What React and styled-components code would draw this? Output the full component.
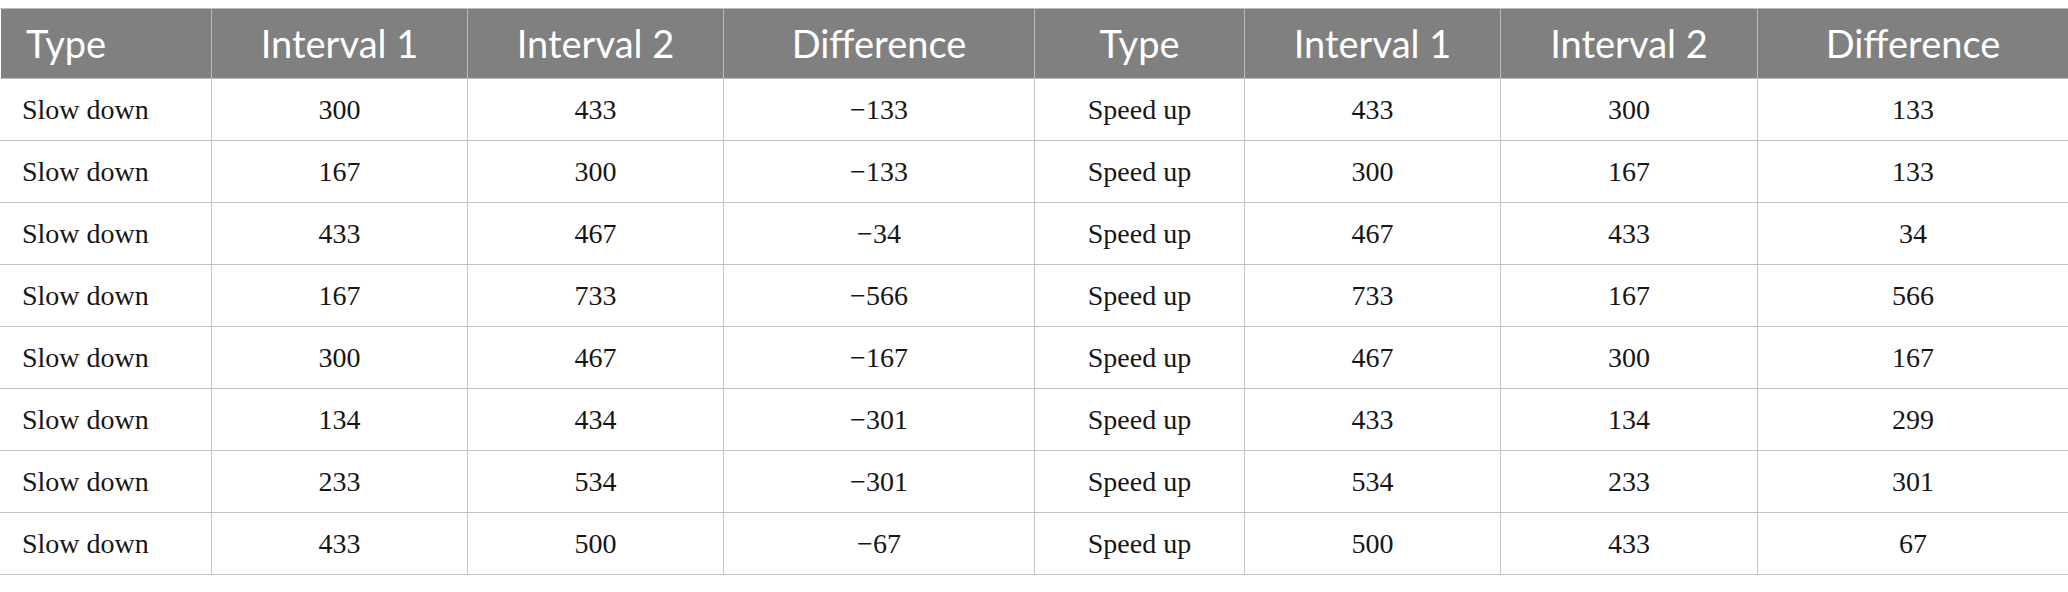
import React from "react";
import styled, { createGlobalStyle } from "styled-components";

const GlobalStyle = createGlobalStyle`
  body {
    margin: 0;
    padding-top: 8px;
    background: #ffffff;
  }
`;

const Table = styled.table`
  width: 2068px;
  border-collapse: collapse;
  table-layout: fixed;
`;

const HeadCell = styled.th`
  box-sizing: border-box;
  height: 70px;
  padding: 0 0 2px ${(props) => (props.$left ? "25px" : "0")};
  background-color: #7f807f;
  color: #ffffff;
  font-family: Lato, "Open Sans", sans-serif;
  font-weight: 400;
  font-size: 38px;
  text-align: ${(props) => (props.$left ? "left" : "center")};
  border: 1px solid #bcbcbc;
  border-left-color: ${(props) => (props.$left ? "transparent" : "#bcbcbc")};
`;

const Cell = styled.td`
  box-sizing: border-box;
  height: 62px;
  padding: 0 0 0 ${(props) => (props.$left ? "21px" : "0")};
  color: #161616;
  font-family: "Liberation Serif", serif;
  font-size: 28px;
  text-align: ${(props) => (props.$left ? "left" : "center")};
  border: 1px solid #c4c4c4;
  border-left-color: ${(props) => (props.$left ? "transparent" : "#c4c4c4")};
`;

const widths = [211, 256, 256, 311, 210, 256, 257, 311];

const headers = [
  "Type",
  "Interval 1",
  "Interval 2",
  "Difference",
  "Type",
  "Interval 1",
  "Interval 2",
  "Difference",
];

const rows = [
  ["300", "433", "−133", "433", "300", "133"],
  ["167", "300", "−133", "300", "167", "133"],
  ["433", "467", "−34", "467", "433", "34"],
  ["167", "733", "−566", "733", "167", "566"],
  ["300", "467", "−167", "467", "300", "167"],
  ["134", "434", "−301", "433", "134", "299"],
  ["233", "534", "−301", "534", "233", "301"],
  ["433", "500", "−67", "500", "433", "67"],
];

const App = () => {
  return (
    <>
      <GlobalStyle />
      <Table>
        <colgroup>
          {widths.map((w, i) => (
            <col key={i} style={{ width: w }} />
          ))}
        </colgroup>
        <thead>
          <tr>
            {headers.map((h, i) => (
              <HeadCell key={i} $left={i === 0}>
                {h}
              </HeadCell>
            ))}
          </tr>
        </thead>
        <tbody>
          {rows.map((r, i) => (
            <tr key={i}>
              <Cell $left>Slow down</Cell>
              <Cell>{r[0]}</Cell>
              <Cell>{r[1]}</Cell>
              <Cell>{r[2]}</Cell>
              <Cell>Speed up</Cell>
              <Cell>{r[3]}</Cell>
              <Cell>{r[4]}</Cell>
              <Cell>{r[5]}</Cell>
            </tr>
          ))}
        </tbody>
      </Table>
    </>
  );
};

export default App;
